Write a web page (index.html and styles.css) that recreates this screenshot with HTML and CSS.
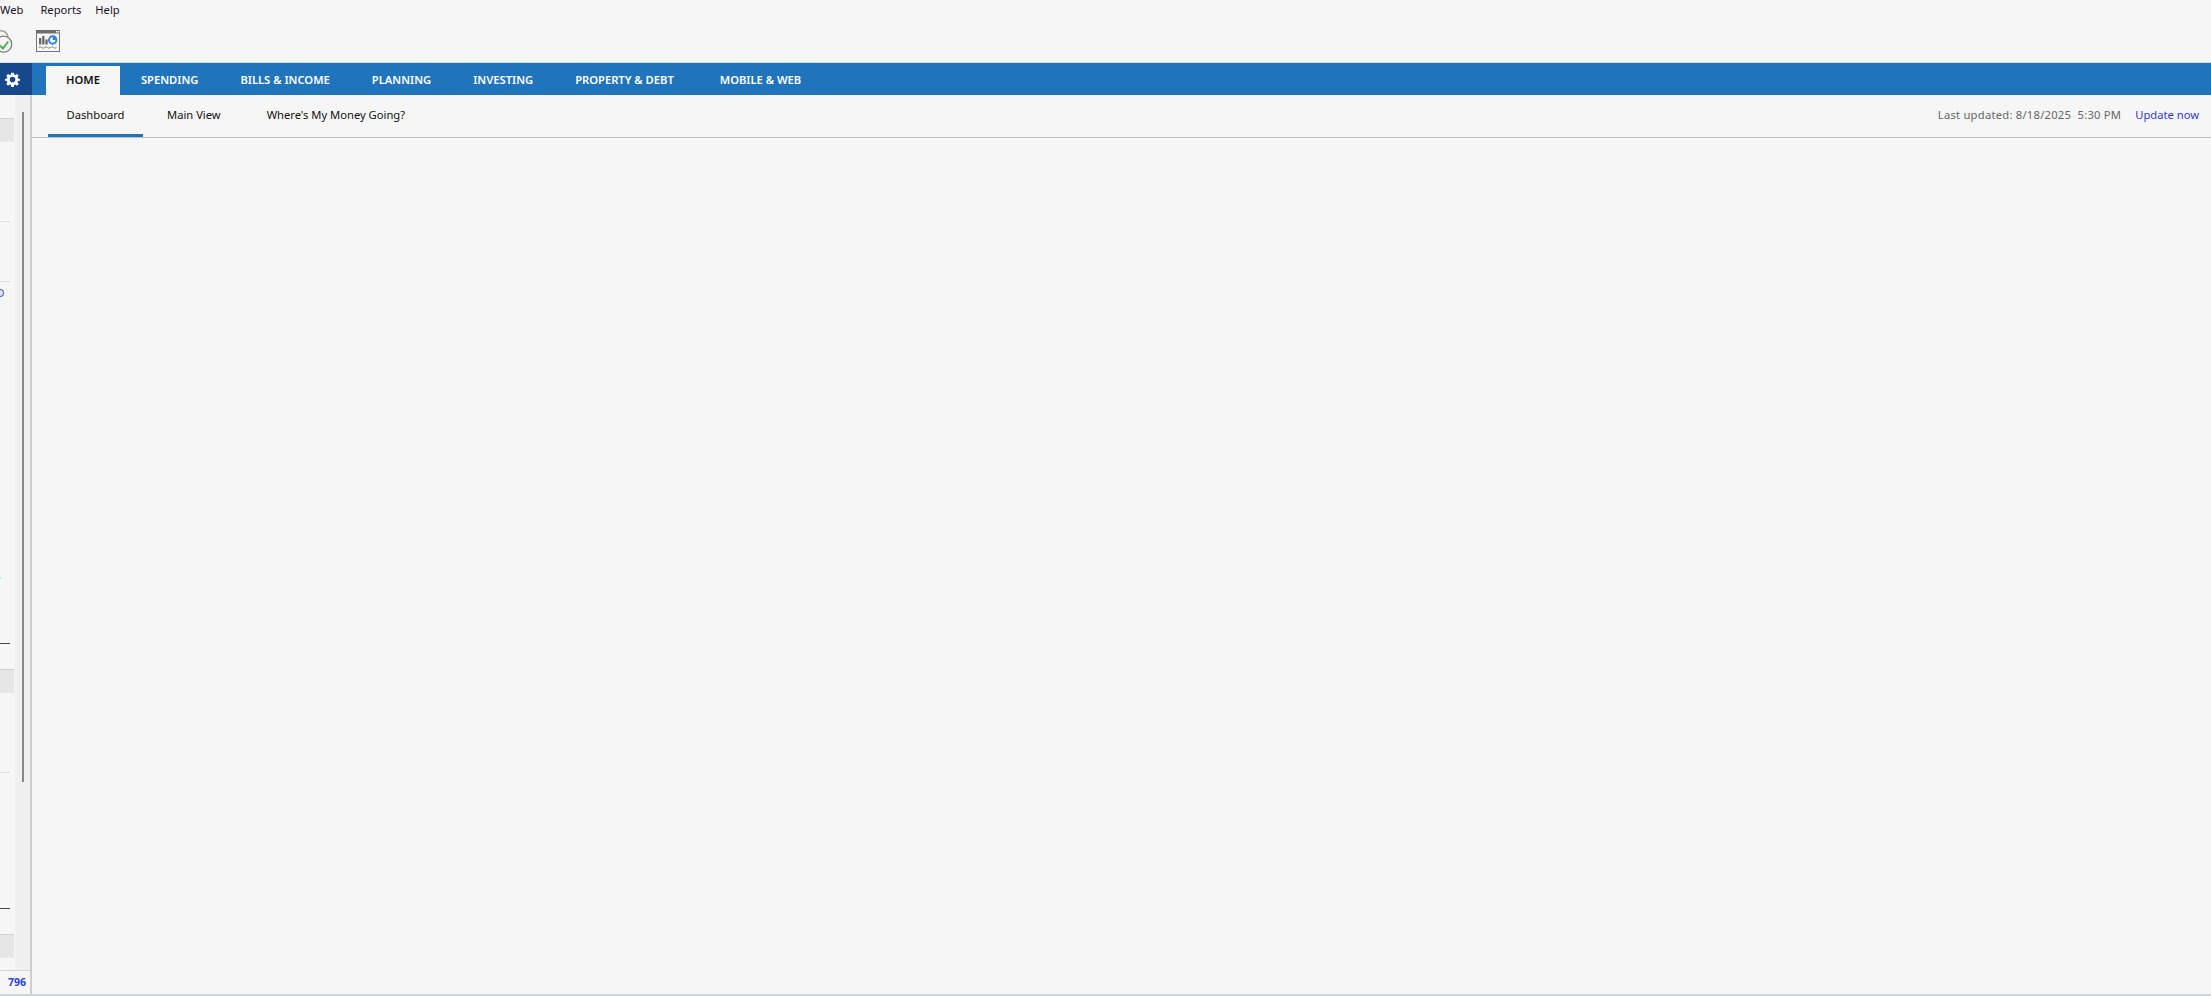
FILE: index.html
```html
<!DOCTYPE html>
<html lang="en">
<head>
<meta charset="utf-8">
<title>Home - Dashboard</title>
<link rel="stylesheet" href="styles.css">
</head>
<body>
<nav class="menubar">
  <span class="menu-item">Web</span>
  <span class="menu-item menu-reports">Reports</span>
  <span class="menu-item">Help</span>
</nav>
<div class="toolbar">
  <svg class="tool-check" width="13" height="25" viewBox="0 0 13 25" aria-hidden="true">
    <path d="M0 1.700 C4 1.200 7.500 4 8 8" fill="none" stroke="#a0a0a0" stroke-width="1.500"/>
    <circle cx="3.700" cy="15.200" r="8" fill="#f6f6f6" stroke="#808080" stroke-width="1.300"/>
    <path d="M0 16.500 L3 19.500 L8.200 12.500" fill="none" stroke="#4caf50" stroke-width="2"/>
  </svg>
  <svg class="tool-chart" width="24" height="22" viewBox="0 0 24 22" aria-hidden="true">
    <rect x="0.500" y="0.500" width="23" height="21" fill="#f8f8f8" stroke="#777" stroke-width="1"/>
    <rect x="0" y="0" width="24" height="3.500" fill="#6e6e6e"/>
    <rect x="20" y="1" width="1.500" height="1.500" fill="#fff"/>
    <rect x="22" y="1" width="1.200" height="1.500" fill="#fff"/>
    <rect x="3" y="8" width="2.300" height="6.500" fill="#666"/>
    <rect x="6.200" y="6" width="2.300" height="8.500" fill="#666"/>
    <rect x="9.400" y="9.500" width="2.300" height="5" fill="#666"/>
    <circle cx="16.700" cy="10" r="3.700" fill="#f8f8f8" stroke="#2f86d6" stroke-width="2"/>
    <path d="M16.700 10 V5.500 A4.500 4.500 0 0 1 21.200 10 Z" fill="#2f86d6"/>
    <path d="M2.500 17.500 q1.500 -1.500 3 0 t3 0 t3 0 t3 0 t3 0 t3 0" fill="none" stroke="#888" stroke-width="1"/>
  </svg>
</div>
<header class="tabbar">
  <div class="gear-box">
    <svg width="15" height="15" viewBox="0 0 24 24" aria-hidden="true">
      <path fill="#fff" fill-rule="evenodd" d="M10 1h4l.6 3.100 1.900.8L19.100 3l2.900 2.900-1.900 2.600.8 1.900L24 11v3l-3.100.5-.8 1.900 1.900 2.700-2.900 2.900-2.600-1.900-1.900.8L14 24h-4l-.6-3.100-1.900-.8L4.900 22 2 19.100l1.900-2.700-.8-1.900L0 14v-3l3.100-.6.800-1.900L2 5.900 4.900 3l2.600 1.900 1.900-.8zM12 7.500a4.500 4.500 0 1 0 0 9 4.500 4.500 0 0 0 0-9z"/>
    </svg>
  </div>
  <a class="tab tab-active">HOME</a>
  <a class="tab">SPENDING</a>
  <a class="tab">BILLS &amp; INCOME</a>
  <a class="tab">PLANNING</a>
  <a class="tab">INVESTING</a>
  <a class="tab">PROPERTY &amp; DEBT</a>
  <a class="tab tab-last">MOBILE &amp; WEB</a>
</header>
<div class="workspace">
  <aside class="sidebar">
    <div class="side-main">
      <div class="side-list">
        <div class="side-row"></div>
        <div class="side-rule rule-a"></div>
        <div class="side-rule rule-b"></div>
        <div class="side-ring"></div>
        <div class="side-dot"></div>
        <div class="side-rule rule-dark rule-c"></div>
        <div class="side-row row-2"></div>
        <div class="side-rule rule-d"></div>
        <div class="side-rule rule-dark rule-e"></div>
        <div class="side-row row-3"></div>
      </div>
      <div class="scroll-track"><div class="scroll-thumb"></div></div>
    </div>
    <div class="side-foot">796</div>
  </aside>
  <main class="content">
    <div class="subbar">
      <a class="subtab subtab-active">Dashboard</a>
      <a class="subtab subtab-main">Main View</a>
      <a class="subtab subtab-where">Where's My Money Going?</a>
      <div class="status">
        <span class="status-text">Last updated: 8/18/2025&nbsp; 5:30 PM</span>
        <a class="status-link">Update now</a>
      </div>
    </div>
  </main>
</div>
<div class="bottom-strip"></div>
</body>
</html>
```
FILE: styles.css
```css
* { box-sizing: border-box; }
html, body { margin: 0; height: 100%; }
body {
  width: 2211px;
  height: 996px;
  overflow: hidden;
  background: #f6f6f6;
  color: #111;
  font-family: "Noto Sans", "Open Sans", "Liberation Sans", sans-serif;
  font-size: 11.200px;
  display: flex;
  flex-direction: column;
}
.menubar {
  height: 19px;
  margin-bottom: 1px;
  flex: none;
  display: flex;
  align-items: center;
  gap: 17px;
  color: #1a1026;
  line-height: 19px;
}
.menu-reports { margin-right: -3px; }
.toolbar {
  height: 43px;
  flex: none;
  display: flex;
  align-items: flex-start;
  border-bottom: 1px solid #dcdcdc;
}
.tool-check { margin-top: 9px; flex: none; }
.tool-chart { margin: 10px 0 0 23px; flex: none; }
.tabbar {
  height: 32px;
  flex: none;
  background: #2074bc;
  display: flex;
  align-items: flex-end;
}
.gear-box {
  width: 32px;
  height: 32px;
  background: #17488c;
  display: flex;
  align-items: center;
  padding-left: 5px;
  margin-right: 14px;
  flex: none;
}
.tab {
  height: 29px;
  padding: 0 21px 3px;
  display: flex;
  align-items: center;
  color: #fff;
  font-weight: 600;
  white-space: nowrap;
}
.tab-active { background: #f6f6f6; color: #111; padding: 0 20px 3px; }
.tab-last { margin-left: 4px; }
.workspace {
  flex: 1;
  display: flex;
  min-height: 0;
}
.sidebar {
  width: 32px;
  flex: none;
  display: flex;
  flex-direction: column;
  border-right: 2px solid #cdcdcd;
}
.side-main { flex: 1; display: flex; min-height: 0; }
.side-list { width: 15px; flex: none; padding-top: 23px; display: flex; flex-direction: column; align-items: flex-start; }
.side-row {
  width: 14px;
  height: 24px;
  background: #e6e6e6;
  border-top: 1px solid #d0d0d0;
  flex: none;
}
.side-rule { width: 10px; height: 1px; background: #dedede; flex: none; }
.rule-dark { background: #444; }
.rule-a { margin-top: 79px; }
.rule-b { margin-top: 59px; }
.side-ring {
  width: 4px;
  height: 8px;
  margin-top: 7px;
  border: 1px solid #2a6fe0;
  border-left: 0;
  border-radius: 0 4px 4px 0;
  background: #f5d8ea;
  flex: none;
}
.side-dot { width: 1px; height: 2px; margin-top: 280px; background: #8ff; flex: none; }
.rule-c { margin-top: 64px; }
.row-2 { margin-top: 25px; }
.rule-d { margin-top: 79px; }
.rule-e { margin-top: 135px; }
.row-3 { margin-top: 25px; }
.scroll-track {
  width: 15px;
  flex: none;
  background: #f0f0f0;
  padding: 17px 0 0 7px;
}
.scroll-thumb { width: 2px; height: 670px; background: #888; }
.side-foot {
  height: 24px;
  flex: none;
  border-top: 1px solid #d4d4d4;
  color: #2a3fd8;
  font-weight: 700;
  font-size: 10.500px;
  text-align: right;
  padding-right: 4px;
  line-height: 22px;
}
.content { flex: 1; min-width: 0; }
.subbar {
  height: 43px;
  display: flex;
  align-items: stretch;
  border-bottom: 1px solid #c0c0c0;
  padding-left: 16px;
}
.subtab {
  display: flex;
  align-items: center;
  justify-content: center;
  padding-bottom: 4px;
  white-space: nowrap;
}
.subtab-active { width: 95px; border-bottom: 3px solid #2074bc; padding-bottom: 1px; }
.subtab-main { margin-left: 24px; }
.subtab-where { margin-left: 46px; }
.status {
  margin-left: auto;
  display: flex;
  align-items: center;
  padding: 0 12px 4px 0;
  gap: 14px;
}
.status-text { color: #666; letter-spacing: 0.250px; }
.status-link { color: #3338dc; }
.bottom-strip { height: 2px; flex: none; background: #ccd4de; }
```
